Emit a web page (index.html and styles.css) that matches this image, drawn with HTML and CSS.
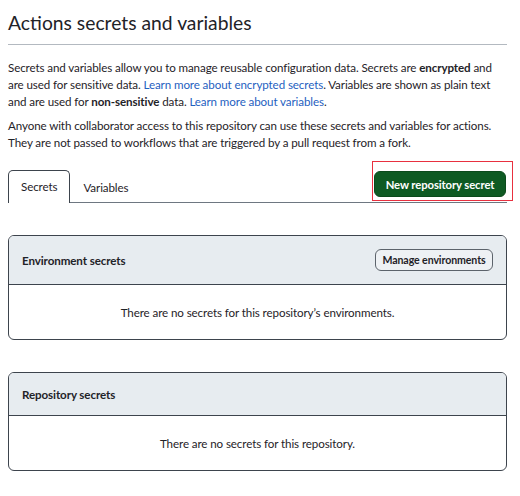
FILE: index.html
```html
<!DOCTYPE html>
<html>
<head>
<meta charset="utf-8">
<link rel="stylesheet" href="styles.css">
</head>
<body>
<div class="page">
  <h1 class="title">Actions secrets and variables</h1>
  <p class="intro">Secrets and variables allow you to manage reusable configuration data. Secrets are <strong>encrypted</strong> and are used for sensitive data. <a href="#">Learn more about encrypted secrets</a>. Variables are shown as plain text and are used for <strong>non-sensitive</strong> data. <a href="#">Learn more about variables</a>.</p>
  <p class="note">Anyone with collaborator access to this repository can use these secrets and variables for actions. They are not passed to workflows that are triggered by a pull request from a fork.</p>
  <div class="tabbar">
    <div class="tabs">
      <span class="tab active">Secrets</span>
      <span class="tab">Variables</span>
    </div>
    <div class="highlight">
      <button class="btn-primary">New repository secret</button>
    </div>
  </div>
  <section class="box box-env">
    <div class="box-header">
      <span class="box-title">Environment secrets</span>
      <button class="btn">Manage environments</button>
    </div>
    <div class="box-body">There are no secrets for this repository’s environments.</div>
  </section>
  <section class="box box-repo">
    <div class="box-header">
      <span class="box-title">Repository secrets</span>
    </div>
    <div class="box-body">There are no secrets for this repository.</div>
  </section>
</div>
</body>
</html>
```
FILE: styles.css
```css
* { box-sizing: border-box; }
body {
  margin: 0;
  background: #fff;
  color: #1f2328;
  font-family: Lato, "Noto Sans", sans-serif;
  font-size: 11.6px;
  letter-spacing: -0.1px;
}
.page {
  width: 507px;
  padding-left: 8px;
}
.title {
  margin: 0;
  padding-top: 9px;
  padding-bottom: 7px;
  font-size: 19.3px;
  font-weight: 400;
  line-height: 28px;
  letter-spacing: 0;
  border-bottom: 1px solid #b3b9c0;
}
.intro {
  margin: 14px 0 0;
  line-height: 17px;
}
.intro strong { font-weight: 700; }
.intro a {
  color: #1f5fbf;
  text-decoration: none;
}
.note {
  margin: 8px 0 0;
  line-height: 16.5px;
}
.tabbar {
  margin-top: 20px;
  display: flex;
  align-items: flex-end;
  justify-content: space-between;
  border-bottom: 1px solid #6e7781;
  height: 32px;
  position: relative;
}
.tabs {
  display: flex;
  align-items: flex-end;
}
.tab {
  display: block;
  padding: 0 12px;
  height: 32px;
  line-height: 31px;
  border: 1px solid transparent;
  border-bottom: none;
  margin-bottom: -1px;
}
.tab.active {
  border-color: #3d444d;
  border-radius: 5px 5px 0 0;
  background: #fff;
  height: 33px;
}
.highlight {
  position: absolute;
  right: -6px;
  top: -10px;
  border: 1px solid #e8303f;
  padding: 9px 6px 3px 1px;
  display: flex;
}
.btn-primary {
  width: 132px;
  height: 26px;
  background: #0e5a23;
  color: #fff;
  border: 1px solid #0b4a1c;
  border-radius: 6px;
  font-family: inherit;
  font-size: 11.3px;
  font-weight: 700;
  letter-spacing: -0.1px;
  padding: 0;
  white-space: nowrap;
}
.box {
  border: 1px solid #3d444d;
  border-radius: 6px;
  overflow: hidden;
}
.box-env { margin-top: 32px; }
.box-repo { margin-top: 32px; }
.box-header {
  background: #e7ecf0;
  border-bottom: 1px solid #3d444d;
  display: flex;
  align-items: center;
  justify-content: space-between;
  padding: 0 13px;
}
.box-env .box-header { height: 49px; }
.box-repo .box-header { height: 43px; }
.box-title {
  font-weight: 700;
}
.btn {
  width: 118px;
  height: 22px;
  padding: 0;
  background: #eef1f4;
  border: 1px solid #5c636b;
  border-radius: 6px;
  font-family: inherit;
  font-size: 10.6px;
  font-weight: 700;
  letter-spacing: -0.1px;
  color: #1f2328;
  white-space: nowrap;
}
.box-body {
  height: 54px;
  display: flex;
  align-items: center;
  justify-content: center;
}
```
